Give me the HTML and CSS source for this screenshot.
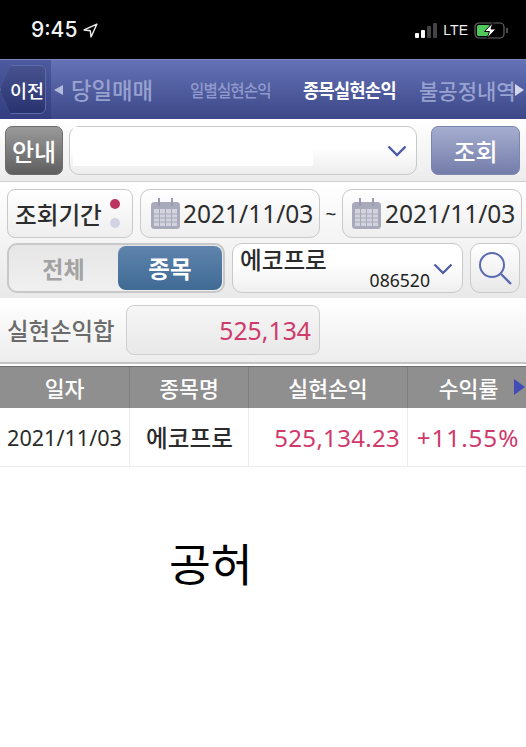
FILE: index.html
```html
<!DOCTYPE html>
<html lang="ko">
<head>
<meta charset="utf-8">
<title>종목실현손익</title>
<link rel="stylesheet" href="styles.css">
</head>
<body>
<div class="status">
  <div class="time">9:45
    <svg class="loc" width="15" height="15" viewBox="0 0 14 14"><path d="M13 1 L1 6.5 L6.8 7.2 L7.5 13 Z" fill="none" stroke="#eee" stroke-width="1.3" stroke-linejoin="round"/></svg>
  </div>
  <div class="sys">
    <div class="bars"><i class="b1"></i><i class="b2"></i><i class="b3"></i><i class="b4"></i></div>
    <span class="lte">LTE</span>
    <svg width="34" height="17" viewBox="0 0 34 17"><rect x="1" y="1" width="29" height="15" rx="4" fill="none" stroke="#666" stroke-width="1.2"/><rect x="3" y="3" width="13" height="11" rx="1.5" fill="#4fc95b"/><path d="M33 6 v5" stroke="#666" stroke-width="1.5"/><path d="M19 0.5 L10.5 9.5 H15.5 L13 16.5 L22 7 H17 Z" fill="#fff" stroke="#000" stroke-width="1"/></svg>
  </div>
</div>

<nav class="nav">
  <div class="back-wrap"><div class="back"><span>이전</span></div></div>
  <span class="arr arr-l"></span>
  <span class="tab tab-a">당일매매</span>
  <span class="tab tab-b">일별실현손익</span>
  <span class="tab tab-c">종목실현손익</span>
  <span class="tab tab-d">불공정내역</span>
  <span class="arr arr-r"></span>
</nav>

<section class="row row-1">
  <button class="btn-info">안내</button>
  <div class="select">
    <div class="blank"></div>
    <svg class="chev" width="20" height="12" viewBox="0 0 20 12"><path d="M1.5 1.5 L10 10 L18.5 1.5" fill="none" stroke="#4a5aa5" stroke-width="2.4"/></svg>
  </div>
  <button class="btn-query">조회</button>
</section>

<section class="row-2-3">
  <div class="row row-2">
    <div class="period">조회기간<span class="dots"><i class="dot on"></i><i class="dot"></i></span></div>
    <div class="date date-1">
      <svg width="30" height="32" viewBox="0 0 30 32"><use href="#cal"/></svg><span>2021/11/03</span>
    </div>
    <span class="tilde">~</span>
    <div class="date date-2">
      <svg width="30" height="32" viewBox="0 0 30 32"><use href="#cal"/></svg><span>2021/11/03</span>
    </div>
  </div>
  <div class="row row-3">
    <div class="seg"><span class="seg-off">전체</span><span class="seg-on">종목</span></div>
    <div class="combo">
      <span class="combo-name">에코프로</span>
      <span class="combo-code">086520</span>
      <svg class="combo-chev" width="20" height="12" viewBox="0 0 20 12"><path d="M1.5 1.5 L10 10 L18.5 1.5" fill="none" stroke="#4a5aa5" stroke-width="2.2"/></svg>
    </div>
    <div class="search">
      <svg width="36" height="36" viewBox="0 0 36 36"><circle cx="15" cy="15" r="12" fill="none" stroke="#5a6ab0" stroke-width="2"/><path d="M24 24 L34 34" stroke="#5a6ab0" stroke-width="2.4"/></svg>
    </div>
  </div>
</section>

<section class="sum">
  <span class="sum-label">실현손익합</span>
  <div class="sum-field">525,134</div>
</section>

<div class="table">
  <div class="thead">
    <div class="c c1">일자</div>
    <div class="c c2">종목명</div>
    <div class="c c3">실현손익</div>
    <div class="c c4">수익률<span class="more"></span></div>
  </div>
  <div class="tbody">
    <div class="c c1 date-cell">2021/11/03</div>
    <div class="c c2 name-cell">에코프로</div>
    <div class="c c3 red">525,134.23</div>
    <div class="c c4 red">+11.55%</div>
  </div>
</div>

<p class="note">공허</p>

<svg class="defs" width="0" height="0">
  <defs>
    <g id="cal">
      <rect x="0" y="4" width="29" height="27" rx="3.5" fill="#a8a9bb"/>
      <rect x="3" y="11" width="23" height="17" fill="#d2d3dc"/>
      <path d="M3 16h23M3 20h23M3 24h23M8.5 11v17M14.5 11v17M20.5 11v17" stroke="#a8a9bb" stroke-width="1"/>
      <path d="M8 0v8M21 0v8" stroke="#9a9bae" stroke-width="2"/>
    </g>
  </defs>
</svg>
</body>
</html>
```

FILE: styles.css
```css
* { box-sizing: border-box; }
html, body { margin: 0; padding: 0; background: #fff; }
body {
  width: 526px;
  height: 747px;
  overflow: hidden;
  font-family: "Noto Sans", "Noto Sans CJK KR", sans-serif;
  color: #2a2a2a;
}
button { font-family: inherit; padding: 0; }

.status {
  height: 59px;
  background: #000;
  display: flex;
  justify-content: space-between;
  color: #f2f2f2;
  padding: 16px 18px 0 31px;
}
.time { font: 500 21px/28px Inter, sans-serif; display: flex; align-items: center; gap: 6px; height: 28px; }
.loc { margin-top: 1px; }
.sys { display: flex; align-items: center; gap: 6px; height: 28px; }
.bars { display: flex; align-items: flex-end; gap: 2px; height: 15px; }
.bars i { display: block; width: 4px; border-radius: 1px; }
.b1 { height: 5px; background: #fff; }
.b2 { height: 8px; background: #fff; }
.b3 { height: 12px; background: #444; }
.b4 { height: 15px; background: #444; }
.lte { font: 400 14px/28px "Liberation Sans", sans-serif; color: #eee; }

.nav {
  height: 60px;
  display: flex;
  align-items: center;
  background: linear-gradient(#6572b6, #3b4787);
  border-top: 1px solid #7a85bd;
  position: relative;
  white-space: nowrap;
  overflow: hidden;
}
.back-wrap {
  width: 51px;
  height: 59px;
  background: linear-gradient(#4e5a9f, #333e80);
  display: flex;
  align-items: center;
  flex: none;
}
.back {
  width: 46px;
  height: 49px;
  background: linear-gradient(#47528f, #28326f);
  border: 1px solid #5f6aa8;
  border-radius: 6px;
  clip-path: polygon(11px 0, 100% 0, 100% 100%, 11px 100%, 0 50%);
  display: flex;
  align-items: center;
  justify-content: center;
  padding-left: 8px;
}
.back span { color: #fff; font-size: 18.5px; font-weight: 500; white-space: nowrap; }
.arr { width: 0; height: 0; border-style: solid; flex: none; }
.arr-l { border-width: 5.5px 9px 5.5px 0; border-color: transparent #b3badb transparent transparent; margin-left: 3px; }
.arr-r { position: absolute; right: 2px; top: 24px; border-width: 6px 0 6px 9px; border-color: transparent transparent transparent #d3d7ea; }
.tab { color: #98a2d0; font-weight: 500; flex: none; display: inline-block; transform-origin: left center; }
.tab-a { font-size: 22.3px; margin-left: 8px; width: 119px; }
.tab-b { font-size: 17.5px; letter-spacing: -1px; width: 113px; color: #8f99cc; transform: scaleX(.89); }
.tab-c { font-size: 19.5px; color: #fff; font-weight: 700; letter-spacing: -.7px; width: 116px; transform: scaleX(.9); }
.tab-d { font-size: 21px; }

.row { display: flex; align-items: center; }
.row-1 {
  height: 63px;
  padding: 0 6px 0 5px;
  background: linear-gradient(#fff, #ececec);
  border-bottom: 1px solid #cfcfcf;
}
.btn-info {
  width: 58px;
  height: 49px;
  border: 1px solid #6d6d6d;
  border-radius: 7px;
  background: linear-gradient(#9a9a9a, #5f5f5f);
  color: #fff;
  font-size: 24px;
  font-weight: 500;
  flex: none;
}
.select {
  width: 348px;
  height: 49px;
  margin-left: 6px;
  border: 1px solid #c9c9c9;
  border-radius: 10px;
  background: linear-gradient(#fff 45%, #ececec);
  display: flex;
  align-items: center;
  padding: 1px 9px 0 3px;
  flex: none;
  justify-content: space-between;
}
.blank { width: 240px; height: 39px; background: #fff; margin-top: -9px; }
.chev { margin-top: 1px; }
.btn-query {
  width: 89px;
  height: 49px;
  margin-left: 14px;
  border: 1px solid #7e86ae;
  border-radius: 7px;
  background: linear-gradient(#a5add0, #747da9);
  color: #fff;
  font-size: 24px;
  font-weight: 500;
  flex: none;
}

.row-2-3 { height: 116px; background: linear-gradient(#fff, #e9e9e9); }
.row-2 { height: 60px; padding: 7px 5px 4px 7px; }
.period {
  width: 126px;
  height: 49px;
  border: 1px solid #c9c9c9;
  border-radius: 8px;
  background: linear-gradient(#fff, #eee);
  display: flex;
  align-items: center;
  padding-left: 7px;
  font-size: 23.6px;
  font-weight: 500;
  color: #2d2d2d;
  flex: none;
  white-space: nowrap;
}
.dots { display: flex; flex-direction: column; gap: 9px; margin-left: 8px; }
.dot { display: block; width: 10px; height: 10px; border-radius: 50%; background: #d1d3e2; }
.dot.on { background: #bb3560; }
.date {
  height: 49px;
  border: 1px solid #c9c9c9;
  border-radius: 10px;
  background: linear-gradient(#fff, #eee);
  display: flex;
  align-items: center;
  font-size: 24.5px;
  color: #2d2d2d;
  flex: none;
  white-space: nowrap;
}
.date svg { flex: none; }
.date-1 { width: 180px; margin-left: 7px; padding-left: 10px; }
.date-1 span { margin-left: 2px; }
.date-2 { width: 180px; padding-left: 9px; }
.date-2 span { margin-left: 3px; }
.tilde { width: 22px; text-align: center; font-size: 19px; flex: none; }

.row-3 { height: 56px; padding: 1px 6px 5px 7px; }
.seg {
  width: 218px;
  height: 50px;
  border: 2px solid #c8c8c8;
  border-radius: 10px;
  background: linear-gradient(#e6e6e6, #f0f0f0);
  display: flex;
  align-items: center;
  flex: none;
  padding-right: 1px;
}
.seg-off { width: 110px; text-align: center; color: #a2a2a2; font-size: 23px; font-weight: 700; }
.seg-on {
  width: 105px;
  height: 44px;
  border-radius: 8px;
  background: linear-gradient(#5f84ad, #3f6a94);
  color: #fff;
  font-size: 23.5px;
  font-weight: 700;
  display: flex;
  align-items: center;
  justify-content: center;
}
.combo {
  width: 231px;
  height: 50px;
  margin-left: 7px;
  border: 1px solid #c9c9c9;
  border-radius: 10px;
  background: linear-gradient(#fff 40%, #efefef);
  position: relative;
  flex: none;
}
.combo-name { position: absolute; left: 7px; top: 0; font-size: 23.6px; font-weight: 500; color: #2b2b2b; line-height: 32px; white-space: nowrap; }
.combo-code { position: absolute; right: 32px; bottom: 1px; font-size: 17.6px; line-height: 22px; color: #1d1d1d; }
.combo-chev { position: absolute; right: 9px; top: 19px; }
.search {
  width: 50px;
  height: 50px;
  margin-left: 7px;
  border: 1px solid #c9c9c9;
  border-radius: 10px;
  background: linear-gradient(#fff, #e8e8e8);
  display: flex;
  align-items: center;
  justify-content: center;
  flex: none;
}

.sum {
  height: 66px;
  display: flex;
  align-items: center;
  padding: 0 0 0 7px;
  background: linear-gradient(#fff, #ededed);
  border-bottom: 2px solid #c4c4c4;
}
.sum-label { color: #6b6b6b; font-size: 23.4px; font-weight: 500; width: 119px; flex: none; white-space: nowrap; }
.sum-field {
  width: 194px;
  height: 50px;
  border: 1px solid #cfcfcf;
  border-radius: 8px;
  background: linear-gradient(#f6f6f6, #e8e8e8);
  color: #cf3a6c;
  font-size: 24.8px;
  line-height: 48px;
  text-align: right;
  padding-right: 8px;
}

.table { margin-top: 2px; }
.thead, .tbody { display: flex; }
.c { display: flex; align-items: center; justify-content: center; flex: none; white-space: nowrap; position: relative; }
.c1 { width: 130px; }
.c2 { width: 119px; }
.c3 { width: 159px; }
.c4 { width: 118px; }
.thead { height: 42px; background: #8f8f8f; border-top: 1px solid #6e6e6e; color: #fff; font-size: 21.6px; font-weight: 500; }
.thead .c { border-right: 1px solid #7f7f7f; height: 100%; }
.thead .c4 { border-right: 0; padding-left: 3px; }
.more { position: absolute; right: 1px; top: 12px; width: 0; height: 0; border-style: solid; border-width: 8px 0 8px 11px; border-color: transparent transparent transparent #3f4db5; }
.tbody { height: 59px; border-bottom: 1px solid #ececec; font-size: 24px; }
.tbody .c { height: 100%; border-right: 1px solid #ececec; }
.tbody .c4 { border-right: 0; padding-left: 2px; }
.date-cell { font-size: 21.6px; color: #2b2b2b; }
.name-cell { font-size: 23.6px; font-weight: 500; color: #2b2b2b; padding-left: 1px; }
.red { color: #cf3a6c; letter-spacing: .3px; }
.tbody .c3.red { justify-content: flex-end; padding-right: 7px; }
.tbody .c4.red { letter-spacing: .9px; font-size: 24.3px; }

.note { margin: 67px 0 0 169px; font-size: 45.5px; line-height: 60px; color: #000; font-weight: 400; }
.defs { position: absolute; }
```
